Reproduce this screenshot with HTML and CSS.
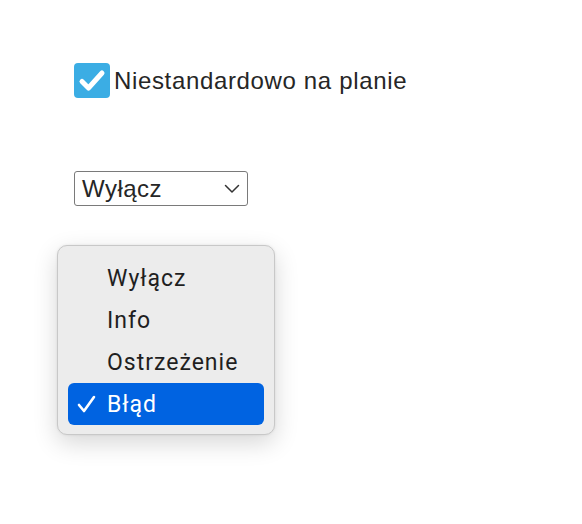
FILE: index.html
```html
<!DOCTYPE html>
<html>
<head>
<meta charset="utf-8">
<link rel="stylesheet" href="styles.css">
</head>
<body>
<div class="page">
  <label class="check-row">
    <span class="checkbox">
      <svg width="36" height="35" viewBox="0 0 36 35"><path d="M8 18.5 L14.5 25 L28 10" fill="none" stroke="#fff" stroke-width="5" stroke-linecap="round" stroke-linejoin="round"/></svg>
    </span>
    <span class="check-label">Niestandardowo na planie</span>
  </label>

  <div class="select">
    <span class="select-value">Wyłącz</span>
    <svg class="chevron" width="16" height="10" viewBox="0 0 16 10"><path d="M1.5 1.5 L8 8 L14.5 1.5" fill="none" stroke="#333" stroke-width="1.5" stroke-linecap="round" stroke-linejoin="round"/></svg>
  </div>

  <div class="menu">
    <div class="item"><span class="tick"></span><span>Wyłącz</span></div>
    <div class="item"><span class="tick"></span><span>Info</span></div>
    <div class="item"><span class="tick"></span><span>Ostrzeżenie</span></div>
    <div class="item selected"><span class="tick"><svg width="19" height="18" viewBox="0 0 19 18"><path d="M2 10 L7 16 L17 2" fill="none" stroke="#fff" stroke-width="2.6" stroke-linecap="round" stroke-linejoin="round"/></svg></span><span>Błąd</span></div>
  </div>
</div>
</body>
</html>
```
FILE: styles.css
```css
html, body {
  margin: 0;
  padding: 0;
  background: #ffffff;
}
.page {
  padding: 63px 0 60px 0;
  font-family: "Liberation Sans", Arial, sans-serif;
  color: #222;
}
.check-row {
  display: flex;
  align-items: center;
  margin-left: 74px;
  height: 35px;
}
.checkbox {
  width: 36px;
  height: 35px;
  border-radius: 4px;
  background: #3badE4;
  display: flex;
}
.check-label {
  margin-left: 4px;
  font-size: 24px;
  letter-spacing: 0.65px;
  color: #262626;
}
.select {
  margin: 73px 0 0 74px;
  height: 33px;
  border: 1px solid #7a7a7a;
  border-radius: 3px;
  display: flex;
  align-items: center;
  justify-content: space-between;
  padding: 0 7px 0 7px;
  box-sizing: content-box;
  width: 158px;
}
.select-value {
  font-size: 24px;
  letter-spacing: 0.5px;
  color: #262626;
}
.menu {
  margin: 39px 0 0 57px;
  width: 218px;
  box-sizing: border-box;
  background: #ececec;
  border: 1px solid #c8c8c8;
  border-radius: 10px;
  padding: 11px 10px 9px 10px;
  box-shadow: 0 8px 24px rgba(0,0,0,0.16), 0 0 3px rgba(0,0,0,0.08);
  font-family: Roboto, "Liberation Sans", sans-serif;
  font-size: 23px;
  letter-spacing: 1px;
  color: #1f1f1f;
}
.item {
  height: 42px;
  display: flex;
  align-items: center;
  border-radius: 6px;
}
.tick {
  width: 39px;
  display: flex;
  align-items: center;
  padding-left: 9px;
  box-sizing: border-box;
}
.selected {
  background: #0063e1;
  color: #ffffff;
}
```
